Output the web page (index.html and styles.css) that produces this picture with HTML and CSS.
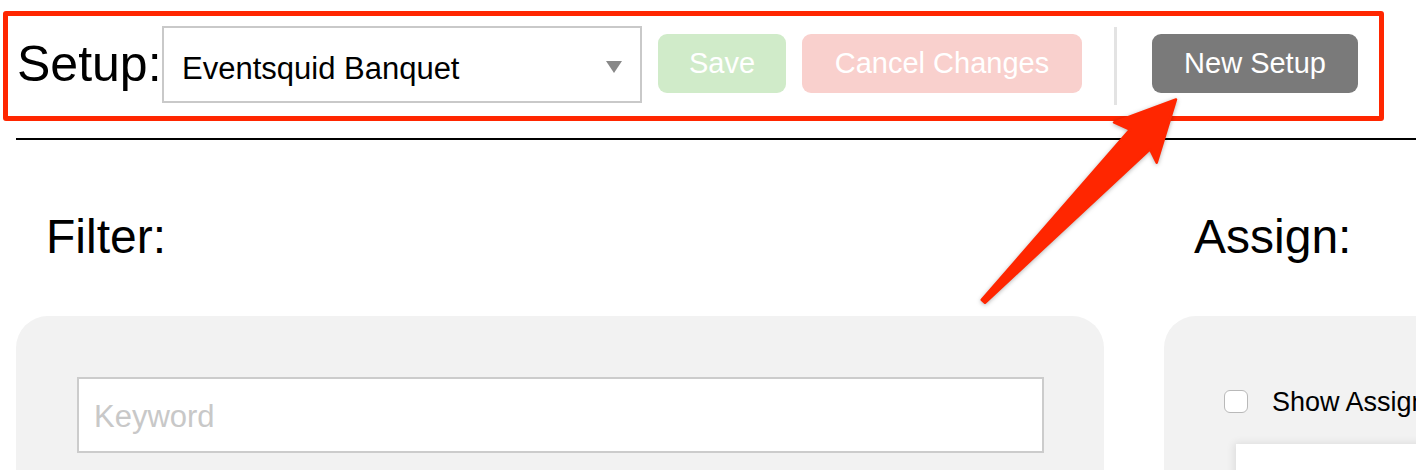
FILE: index.html
```html
<!DOCTYPE html>
<html lang="en">
<head>
<meta charset="utf-8">
<title>Setup</title>
<link rel="stylesheet" href="styles.css">
</head>
<body>
<div class="page">
  <header class="toolbar">
    <span class="setup-label">Setup:</span>
    <div class="select">
      <span class="select-text">Eventsquid Banquet</span>
      <span class="select-caret"></span>
    </div>
    <button class="btn btn-save">Save</button>
    <button class="btn btn-cancel">Cancel Changes</button>
    <span class="divider"></span>
    <button class="btn btn-new">New Setup</button>
  </header>
  <div class="rule"></div>
  <main class="columns">
    <section class="col">
      <h2 class="col-title">Filter:</h2>
      <div class="panel">
        <input class="keyword" type="text" placeholder="Keyword">
      </div>
    </section>
    <section class="col">
      <h2 class="col-title">Assign:</h2>
      <div class="panel panel-assign">
        <label class="check-row"><span class="checkbox"></span><span class="check-text">Show Assigned Only</span></label>
        <div class="list-box"></div>
      </div>
    </section>
  </main>

  <div class="highlight-box"></div>
  <svg class="arrow" width="1416" height="470" viewBox="0 0 1416 470">
    <path d="M1176 99.5 L1114 122.3 L1130 129.5 L981.7 299.8 L985 302.8 L1150 149.3 L1156.7 162.7 Z" fill="#ff2600" stroke="#ff2600" stroke-width="2.5" stroke-linejoin="round"/>
  </svg>
</div>
</body>
</html>
```

FILE: styles.css
```css
html, body {
  margin: 0;
  padding: 0;
  overflow: hidden;
  background: #ffffff;
}

body {
  font-family: "Liberation Sans", Arial, Helvetica, sans-serif;
  color: #000;
}

.page {
  position: relative;
  width: 1416px;
  height: 470px;
  overflow: hidden;
}

.toolbar {
  display: flex;
  align-items: flex-start;
  padding: 26px 0 0 17px;
  height: 77px;
}

.setup-label {
  font-size: 50px;
  line-height: 50px;
  margin-top: 13px;
  white-space: nowrap;
  width: 145px;
}

.select {
  box-sizing: border-box;
  width: 480px;
  height: 77px;
  border: 2px solid #c9c9c9;
  background: #fff;
  display: flex;
  align-items: flex-start;
  justify-content: space-between;
  padding: 23px 18px 0 18px;
  margin-right: 16px;
}

.select-text {
  font-size: 31px;
  line-height: 36px;
  white-space: nowrap;
}

.select-caret {
  width: 0;
  height: 0;
  border-left: 8px solid transparent;
  border-right: 8px solid transparent;
  border-top: 12px solid #888;
  margin-top: 10px;
}

.btn {
  font-family: "Liberation Sans", Arial, Helvetica, sans-serif;
  font-size: 29px;
  line-height: 59px;
  height: 59px;
  padding: 0 31px;
  border: none;
  border-radius: 9px;
  color: #fff;
  margin-top: 8px;
  white-space: nowrap;
}

.btn-save {
  background: #d0ebc9;
  width: 128px;
  margin-right: 16px;
}

.btn-cancel {
  background: #f9d0cd;
  width: 280px;
  margin-right: 32px;
}

.btn-new {
  background: #7a7a7a;
  width: 206px;
}

.divider {
  width: 3px;
  height: 78px;
  margin-top: 1px;
  background: #e3e3e3;
  margin-right: 35px;
}

.rule {
  margin: 35px 0 0 16px;
  height: 2px;
  background: #000;
}

.columns {
  display: grid;
  grid-template-columns: 1088px 1088px;
  column-gap: 60px;
  padding-left: 16px;
}

.col-title {
  margin: 69px 0 0 0;
  padding-left: 30px;
  font-size: 48px;
  line-height: 56px;
  font-weight: normal;
}

.panel {
  margin-top: 51px;
  background: #f2f2f2;
  border-radius: 32px 32px 0 0;
  height: 300px;
  padding: 61px 60px 0 61px;
  box-sizing: border-box;
}

.keyword {
  display: block;
  box-sizing: border-box;
  width: 100%;
  height: 76px;
  border: 2px solid #cccccc;
  background: #fff;
  margin: 0;
  padding: 4px 15px 0 15px;
  font-family: "Liberation Sans", Arial, Helvetica, sans-serif;
  font-size: 31px;
  color: #333;
  outline: none;
}

.keyword::placeholder {
  color: #c8c8c8;
}

.panel-assign {
  padding: 74px 0 0 60px;
}

.check-row {
  display: flex;
  align-items: center;
  gap: 24px;
  white-space: nowrap;
  height: 23px;
}

.checkbox {
  box-sizing: border-box;
  width: 24px;
  height: 23px;
  border: 1.5px solid #b9b9b9;
  border-radius: 6px;
  background: #fff;
  flex: none;
}

.check-text {
  font-size: 27px;
  line-height: 30px;
  margin-top: 1px;
}

.list-box {
  margin: 31px 0 0 12px;
  height: 200px;
  background: #fff;
  box-shadow: -2px -1px 8px rgba(0, 0, 0, 0.09);
}

.highlight-box {
  position: absolute;
  left: 3px;
  top: 11px;
  width: 1381px;
  height: 110px;
  box-sizing: border-box;
  border: 5px solid #ff2600;
  border-radius: 3px;
  pointer-events: none;
}

.arrow {
  position: absolute;
  left: 0;
  top: 0;
  pointer-events: none;
  filter: drop-shadow(0 1px 2px rgba(0, 0, 0, 0.3));
}
```
